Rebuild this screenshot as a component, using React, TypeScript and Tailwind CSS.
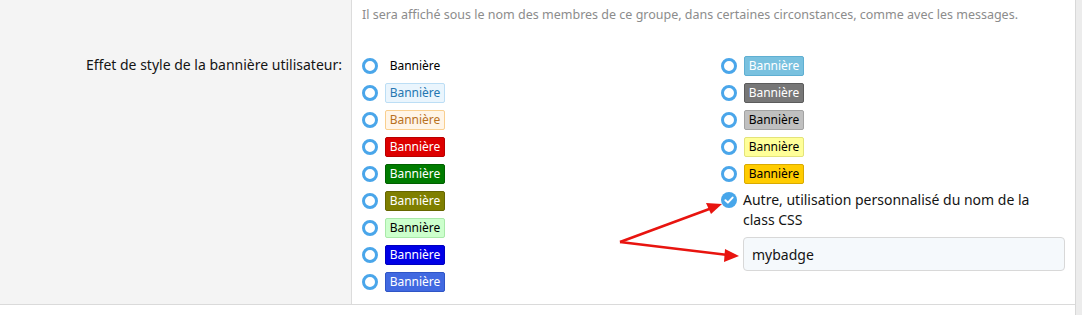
import React from "react";

const LEFT_BADGES = [
  { cls: "text-black border-transparent bg-transparent" },
  { cls: "bg-[#eaf5fd] border-[#bcdef5] text-[#2577b1]" },
  { cls: "bg-[#fff5e8] border-[#f9cf8f] text-[#b8711f]" },
  { cls: "bg-[#dd0000] border-[#b80000] text-white" },
  { cls: "bg-[#007c00] border-[#006000] text-white" },
  { cls: "bg-[#7f7f00] border-[#666600] text-white" },
  { cls: "bg-[#ccffcc] border-[#a9e9a9] text-black" },
  { cls: "bg-[#0000e6] border-[#0000c0] text-white" },
  { cls: "bg-[#4169e1] border-[#2f55c6] text-white" },
];

const RIGHT_BADGES = [
  { cls: "bg-[#79c1df] border-[#5fafd2] text-white" },
  { cls: "bg-[#777777] border-[#5c5c5c] text-white" },
  { cls: "bg-[#c0c0c0] border-[#a3a3a3] text-black" },
  { cls: "bg-[#ffff99] border-[#e3e37a] text-black" },
  { cls: "bg-[#ffcc00] border-[#d9aa00] text-black" },
];

const Radio = () => (
  <span className="block h-[16px] w-[16px] shrink-0 rounded-full border-[3px] border-[#4aa6ea] bg-white" />
);

const CheckedRadio = () => (
  <svg width="16" height="16" viewBox="0 0 16 16" className="shrink-0">
    <circle cx="8" cy="8" r="8" fill="#47a6ea" />
    <path d="M4.4 8.2 L6.9 10.6 L11.6 5.6" fill="none" stroke="#fff" strokeWidth="2" strokeLinecap="round" strokeLinejoin="round" />
  </svg>
);

const BadgeRow = ({ cls }: { cls: string }) => (
  <div className="flex h-[27px] items-center gap-[7px]">
    <Radio />
    <span
      className={`inline-flex h-[20px] w-[60px] items-center justify-center rounded-[2px] border text-[12px] leading-none ${cls}`}
    >
      Bannière
    </span>
  </div>
);

export default function App() {
  return (
    <div className="relative h-[315px] w-[1082px] overflow-hidden bg-[#ececec] font-['Noto_Sans',sans-serif]">
      <div className="h-full w-[1076px] border-r border-[#d8d8d8] bg-white">
        <div className="flex border-b border-[#dadada]">
          <div className="w-[352px] shrink-0 border-r border-[#dcdcdc] bg-[#f4f4f4] pr-[9px] pt-[55px] text-right text-[14px] leading-[20px] text-[#141414]">
            Effet de style de la bannière utilisateur:
          </div>
          <div className="flex-1 pl-[10px] pt-[6px] pb-[9px]">
            <p className="text-[12.5px] leading-[18px] text-[#8c8c8c]">
              Il sera affiché sous le nom des membres de ce groupe, dans certaines circonstances, comme avec les messages.
            </p>
            <div className="mt-[28px] grid grid-cols-[359px_1fr]">
              <div className="flex flex-col">
                {LEFT_BADGES.map((b, i) => (
                  <BadgeRow key={i} cls={b.cls} />
                ))}
              </div>
              <div className="flex flex-col pr-[10px]">
                {RIGHT_BADGES.map((b, i) => (
                  <BadgeRow key={i} cls={b.cls} />
                ))}
                <div className="mt-[3px] flex items-start gap-[6px]">
                  <span className="mt-[2px]">
                    <CheckedRadio />
                  </span>
                  <span className="w-[300px] text-[14px] leading-[20px] text-[#141414]">
                    Autre, utilisation personnalisé du nom de la class CSS
                  </span>
                </div>
                <div className="ml-[22px] mt-[7px] flex h-[34px] items-center rounded-[4px] border border-[#d8d8d8] bg-[#f5f9fc] px-[8px] text-[14px] text-[#141414]">
                  mybadge
                </div>
              </div>
            </div>
          </div>
        </div>
      </div>
      <svg className="pointer-events-none absolute left-0 top-0" width="1082" height="315">
        <line x1="620" y1="242" x2="712" y2="208" stroke="#e8140f" strokeWidth="2.5" />
        <polygon points="722,204 706,203 711,214" fill="#e8140f" />
        <line x1="620" y1="242" x2="728" y2="255" stroke="#e8140f" strokeWidth="2.5" />
        <polygon points="739,256 725,249 724,262" fill="#e8140f" />
      </svg>
    </div>
  );
}
